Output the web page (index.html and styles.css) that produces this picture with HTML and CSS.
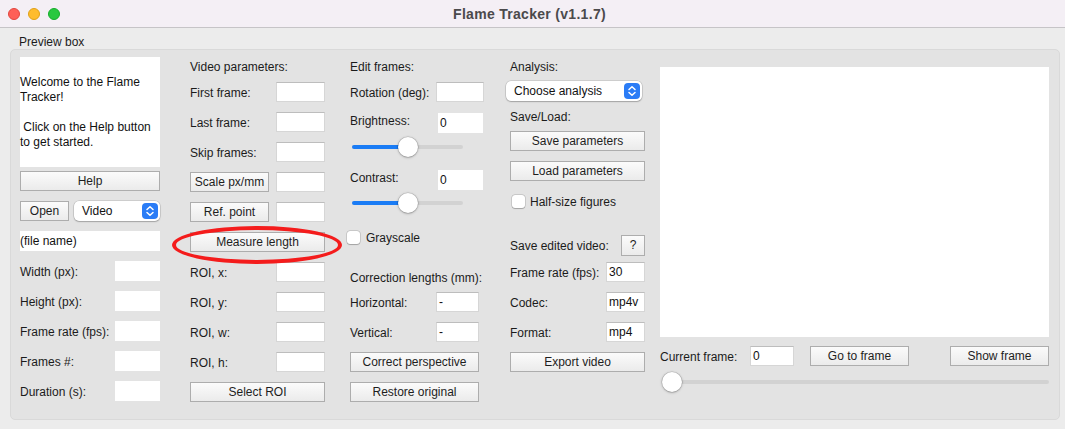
FILE: index.html
```html
<!DOCTYPE html>
<html>
<head>
<meta charset="utf-8">
<title>Flame Tracker (v1.1.7)</title>
<link rel="stylesheet" href="styles.css">
</head>
<body>
<div class="titlebar">
  <div class="lights">
    <span class="light red"></span>
    <span class="light yellow"></span>
    <span class="light green"></span>
  </div>
  <div class="title">Flame Tracker (v1.1.7)</div>
  <div></div>
</div>
<div class="content">
  <div class="group-label">Preview box</div>
  <div class="group">
    <!-- Column 1 -->
    <div class="col col1">
      <div class="welcome">Welcome to the Flame<br>Tracker!<br><br>&nbsp;Click on the Help button<br>to get started.</div>
      <div class="btn help">Help</div>
      <div class="row">
        <div class="btn open">Open</div>
        <div class="select video"><span>Video</span>
          <svg class="stepper" width="16" height="16" viewBox="0 0 16 16"><rect width="16" height="16" rx="4" fill="#2a7cf6"/><path d="M5 6.5 L8 3.7 L11 6.5 M5 9.5 L8 12.3 L11 9.5" stroke="#fff" stroke-width="1.5" fill="none" stroke-linecap="round" stroke-linejoin="round"/></svg>
        </div>
      </div>
      <div class="row"><div class="f full">(file name)</div></div>
      <div class="row"><span>Width (px):</span><div class="f w45"></div></div>
      <div class="row"><span>Height (px):</span><div class="f w45"></div></div>
      <div class="row"><span>Frame rate (fps):</span><div class="f w45"></div></div>
      <div class="row"><span>Frames #:</span><div class="f w45"></div></div>
      <div class="row"><span>Duration (s):</span><div class="f w45"></div></div>
    </div>

    <!-- Column 2 -->
    <div class="col col2">
      <div class="heading">Video parameters:</div>
      <div class="row"><span>First frame:</span><div class="f b w49"></div></div>
      <div class="row"><span>Last frame:</span><div class="f b w49"></div></div>
      <div class="row"><span>Skip frames:</span><div class="f b w49"></div></div>
      <div class="row"><div class="btn w79">Scale px/mm</div><div class="f b w49"></div></div>
      <div class="row"><div class="btn w79">Ref. point</div><div class="f b w49"></div></div>
      <div class="row measure">
        <div class="btn full">Measure length</div>
        <div class="circle"></div>
      </div>
      <div class="row"><span>ROI, x:</span><div class="f b w49"></div></div>
      <div class="row"><span>ROI, y:</span><div class="f b w49"></div></div>
      <div class="row"><span>ROI, w:</span><div class="f b w49"></div></div>
      <div class="row"><span>ROI, h:</span><div class="f b w49"></div></div>
      <div class="row"><div class="btn full">Select ROI</div></div>
    </div>

    <!-- Column 3 -->
    <div class="col col3">
      <div class="heading">Edit frames:</div>
      <div class="row"><span>Rotation (deg):</span><div class="f b w48 mr1"></div></div>
      <div class="row r-bright"><span class="up">Brightness:</span><div class="f w45 mr2">0</div></div>
      <div class="slider s1"><div class="track"><div class="fill"></div></div><div class="knob"></div></div>
      <div class="row r-contrast"><span class="up">Contrast:</span><div class="f w45 mr2">0</div></div>
      <div class="slider s2"><div class="track"><div class="fill"></div></div><div class="knob"></div></div>
      <div class="check gray"><span class="box"></span><span>Grayscale</span></div>
      <div class="heading corr">Correction lengths (mm):</div>
      <div class="row r-h"><span>Horizontal:</span><div class="f b w43 mr6">-</div></div>
      <div class="row"><span>Vertical:</span><div class="f b w43 mr6">-</div></div>
      <div class="row"><div class="btn w129">Correct perspective</div></div>
      <div class="row"><div class="btn w129">Restore original</div></div>
    </div>

    <!-- Column 4 -->
    <div class="col col4">
      <div class="heading">Analysis:</div>
      <div class="select analysis"><span>Choose analysis</span>
        <svg class="stepper" width="16" height="16" viewBox="0 0 16 16"><rect width="16" height="16" rx="4" fill="#2a7cf6"/><path d="M5 6.5 L8 3.7 L11 6.5 M5 9.5 L8 12.3 L11 9.5" stroke="#fff" stroke-width="1.5" fill="none" stroke-linecap="round" stroke-linejoin="round"/></svg>
      </div>
      <div class="heading saveload">Save/Load:</div>
      <div class="row r-save"><div class="btn full">Save parameters</div></div>
      <div class="row"><div class="btn full">Load parameters</div></div>
      <div class="check half"><span class="box"></span><span>Half-size figures</span></div>
      <div class="row r-sev"><span>Save edited video:</span><div class="btn q">?</div></div>
      <div class="row r-fps"><span>Frame rate (fps):</span><div class="f b w39">30</div></div>
      <div class="row"><span>Codec:</span><div class="f b w39">mp4v</div></div>
      <div class="row"><span>Format:</span><div class="f b w39">mp4</div></div>
      <div class="row"><div class="btn full">Export video</div></div>
    </div>

    <!-- Column 5 -->
    <div class="col col5">
      <div class="canvas"></div>
      <div class="row controls">
        <span class="cf-label">Current frame:</span>
        <div class="f b w44">0</div>
        <div class="btn w99 goto">Go to frame</div>
        <div class="btn w99 show">Show frame</div>
      </div>
      <div class="slider s3"><div class="track"></div><div class="knob"></div></div>
    </div>
  </div>
</div>
</body>
</html>
```

FILE: styles.css
```css
html, body {
  margin: 0;
  padding: 0;
}
body {
  width: 1065px;
  height: 429px;
  overflow: hidden;
  background: #ececec;
  font-family: "Liberation Sans", Arial, Helvetica, sans-serif;
  font-size: 12px;
  color: #1b1b1b;
}

/* Title bar */
.titlebar {
  height: 27px;
  background: #f4eff5;
  border-bottom: 1px solid #c6c4c7;
  display: grid;
  grid-template-columns: 1fr auto 1fr;
  align-items: center;
}
.lights {
  display: flex;
  gap: 8px;
  padding-left: 8px;
}
.light {
  width: 12px;
  height: 12px;
  border-radius: 50%;
  box-sizing: border-box;
}
.red { background: #fe5f57; border: 0.5px solid #e2463f; }
.yellow { background: #febc2e; border: 0.5px solid #e1a116; }
.green { background: #28c840; border: 0.5px solid #14ae2a; }
.title {
  font-weight: bold;
  font-size: 14px;
  letter-spacing: 0.3px;
  color: #4b4a4c;
  margin-right: 6px;
}

/* Content */
.group-label {
  height: 14px;
  line-height: 14px;
  padding: 7px 0 0 19px;
}
.group {
  margin-left: 10px;
  width: 1050px;
  height: 371px;
  box-sizing: border-box;
  border: 1px solid #d9d9d9;
  border-radius: 5px;
  background: #e3e3e3;
  padding: 7px 0 0 9px;
  display: flex;
  align-items: flex-start;
}

.col {
  display: flex;
  flex-direction: column;
}
.col1 { width: 140px; }
.col2 { width: 135px; margin-left: 30px; }
.col3 { width: 135px; margin-left: 25px; }
.col4 { width: 135px; margin-left: 25px; }
.col5 { width: 389px; margin-left: 15px; }

.heading {
  height: 25px;
  line-height: 20px;
}

.row {
  height: 20px;
  margin-bottom: 10px;
  display: flex;
  align-items: center;
  justify-content: space-between;
  flex-shrink: 0;
}
.row > span { padding-top: 1px; }

/* Fields */
.f {
  height: 20px;
  box-sizing: border-box;
  background: #fff;
  line-height: 20px;
  padding-left: 2px;
  color: #111;
}
.f.b {
  border: 1px solid #d6d6d6;
  border-top-color: #bdbdbd;
  line-height: 18px;
}
.full { width: 100%; }
.w39 { width: 39px; }
.w43 { width: 43px; }
.w44 { width: 44px; }
.w45 { width: 45px; }
.w48 { width: 48px; }
.w49 { width: 49px; }
.w79 { width: 79px; }
.w99 { width: 99px; }
.w129 { width: 129px; }
.mr1 { margin-right: 1px; }
.mr2 { margin-right: 2px; }
.mr6 { margin-right: 6px; }

/* Buttons */
.btn {
  height: 20px;
  box-sizing: border-box;
  border: 1px solid #adadad;
  background: linear-gradient(#fbfbfb, #ebebeb);
  text-align: center;
  line-height: 19px;
  color: #1e1e1e;
}
.btn.full { width: 100%; }

/* Column 1 */
.welcome {
  height: 110px;
  box-sizing: border-box;
  background: #fff;
  padding-top: 18px;
  line-height: 15px;
  color: #111;
}
.help {
  margin-top: 4px;
  margin-bottom: 10px;
  width: 140px;
}
.open { width: 49px; }
.col1 .f.full { padding-left: 0; }

/* Select */
.select {
  height: 20px;
  box-sizing: border-box;
  background: #fff;
  border-radius: 5px;
  box-shadow: 0 0 0 0.5px rgba(0, 0, 0, 0.18), 0 1px 1.5px rgba(0, 0, 0, 0.22);
  display: flex;
  align-items: center;
  justify-content: space-between;
  padding: 0 2px 0 8px;
  color: #111;
}
.video { width: 86px; }
.analysis {
  width: 136px;
  margin-left: -4px;
  margin-top: -1px;
}

/* Measure length circle */
.measure { position: relative; margin-bottom: 10px; }
.circle {
  position: absolute;
  left: -18px;
  top: -6px;
  width: 170px;
  height: 38px;
  box-sizing: border-box;
  border: 4.5px solid #f41c1c;
  border-radius: 50%;
}

/* Column 3 */
.r-bright { margin-top: 1px; margin-bottom: 0; }
.r-contrast { margin-top: 9px; margin-bottom: 0; }
.row > span.up { margin-top: -4px; padding-top: 0; }
.slider {
  position: relative;
  height: 28px;
  flex-shrink: 0;
}
.s1 { width: 111px; margin-left: 2px; }
.s2 { width: 111px; margin-left: 2px; height: 25px; }
.track {
  position: absolute;
  left: 0;
  right: 0;
  top: 50%;
  height: 4px;
  margin-top: -2px;
  border-radius: 2px;
  background: #d2d2d2;
}
.fill {
  width: 56px;
  height: 4px;
  border-radius: 2px;
  background: #1a7cf5;
}
.knob {
  position: absolute;
  top: 50%;
  width: 20px;
  height: 20px;
  margin-top: -10px;
  border-radius: 50%;
  background: #fff;
  box-shadow: 0 0 0 0.5px rgba(0, 0, 0, 0.15), 0 0.5px 2.5px rgba(0, 0, 0, 0.35);
}
.s1 .knob, .s2 .knob { left: 46px; }

.check {
  display: flex;
  align-items: center;
  height: 13px;
  flex-shrink: 0;
}
.box {
  width: 13px;
  height: 13px;
  box-sizing: border-box;
  border-radius: 3px;
  background: #fff;
  box-shadow: 0 0 0 0.5px rgba(0, 0, 0, 0.2), 0 0.5px 1px rgba(0, 0, 0, 0.2);
}
.gray { margin-top: 16px; margin-left: -3px; }
.gray .box { margin-right: 6px; }
.corr { margin-top: 24px; height: 20px; margin-bottom: 4px; }

/* Column 4 */
.saveload { margin-top: 6px; height: 20px; margin-bottom: 4px; line-height: 20px; }
.r-save { margin-top: 0; }
.half { margin-top: 4px; margin-left: 2px; }
.half .box { margin-right: 5px; }
.r-sev { margin-top: 27px; height: 21px; margin-bottom: 6px; }
.q { width: 24px; height: 21px; line-height: 19px; }
.r-fps { margin-top: 0; }

/* Column 5 */
.canvas {
  margin-top: 10px;
  height: 270px;
  background: #fff;
}
.controls {
  margin-top: 9px;
  margin-bottom: 0;
  justify-content: flex-start;
}
.cf-label { width: 90px; }
.goto { margin-left: 16px; }
.show { margin-left: auto; }
.s3 {
  width: 387px;
  margin-left: 2px;
  height: 32px;
}
.s3 .knob { left: 0; }
```
